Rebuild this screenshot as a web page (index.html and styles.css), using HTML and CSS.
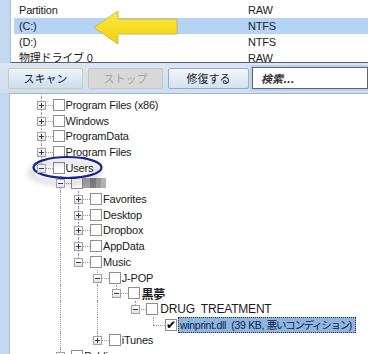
FILE: index.html
```html
<!DOCTYPE html>
<html lang="ja">
<head>
    <meta charset="UTF-8">
    <meta name="viewport" content="width=device-width, initial-scale=1.0">
    <title>ファイル修復</title>
    <link rel="stylesheet" href="styles.css">
</head>
<body>
    <div class="window">
        <div class="drives">
            <div class="drive"><span>Partition</span><span>RAW</span></div>
            <div class="drive selected"><span>(C:)</span><span>NTFS</span></div>
            <div class="drive"><span>(D:)</span><span>NTFS</span></div>
            <div class="drive"><span>物理ドライブ 0</span><span>RAW</span></div>
        </div>

        <div class="toolbar">
            <button class="btn hot">スキャン</button>
            <button class="btn" disabled>ストップ</button>
            <button class="btn">修復する</button>
            <div class="search">検索...</div>
        </div>

        <div class="tree">
            <div class="node stub"><span class="guide"></span><span class="guide line"></span></div>

            <div class="node"><span class="guide"></span><span class="twig more"><i class="exp plus"></i></span><span class="box"></span><span class="label">Program Files (x86)</span></div>
            <div class="node"><span class="guide"></span><span class="twig more"><i class="exp plus"></i></span><span class="box"></span><span class="label">Windows</span></div>
            <div class="node"><span class="guide"></span><span class="twig more"><i class="exp plus"></i></span><span class="box"></span><span class="label">ProgramData</span></div>
            <div class="node"><span class="guide"></span><span class="twig more"><i class="exp plus"></i></span><span class="box"></span><span class="label">Program Files</span></div>
            <div class="node"><span class="guide"></span><span class="twig"><i class="exp"></i></span><span class="box"></span><span class="label">Users</span></div>

            <div class="node"><span class="guide"></span><span class="guide"></span><span class="twig more"><i class="exp"></i></span><span class="box"></span><span class="blur"></span></div>

            <div class="node"><span class="guide"></span><span class="guide"></span><span class="guide line"></span><span class="twig more"><i class="exp plus"></i></span><span class="box"></span><span class="label">Favorites</span></div>
            <div class="node"><span class="guide"></span><span class="guide"></span><span class="guide line"></span><span class="twig more"><i class="exp plus"></i></span><span class="box"></span><span class="label">Desktop</span></div>
            <div class="node"><span class="guide"></span><span class="guide"></span><span class="guide line"></span><span class="twig more"><i class="exp plus"></i></span><span class="box"></span><span class="label">Dropbox</span></div>
            <div class="node"><span class="guide"></span><span class="guide"></span><span class="guide line"></span><span class="twig more"><i class="exp plus"></i></span><span class="box"></span><span class="label">AppData</span></div>
            <div class="node"><span class="guide"></span><span class="guide"></span><span class="guide line"></span><span class="twig"><i class="exp"></i></span><span class="box"></span><span class="label">Music</span></div>

            <div class="node"><span class="guide"></span><span class="guide"></span><span class="guide line"></span><span class="guide"></span><span class="twig more"><i class="exp"></i></span><span class="box"></span><span class="label">J-POP</span></div>
            <div class="node"><span class="guide"></span><span class="guide"></span><span class="guide line"></span><span class="guide"></span><span class="guide line"></span><span class="twig"><i class="exp"></i></span><span class="box"></span><span class="label jp">黒夢</span></div>
            <div class="node"><span class="guide"></span><span class="guide"></span><span class="guide line"></span><span class="guide"></span><span class="guide line"></span><span class="guide"></span><span class="twig"><i class="exp"></i></span><span class="box"></span><span class="label big">DRUG&nbsp; TREATMENT</span></div>
            <div class="node"><span class="guide"></span><span class="guide"></span><span class="guide line"></span><span class="guide"></span><span class="guide line"></span><span class="guide"></span><span class="guide"></span><span class="twig"></span><span class="box checked">✔</span><span class="label picked">winprint.dll&nbsp; (39 KB, <span class="cjk">悪いコンディション</span>)</span></div>
            <div class="node"><span class="guide"></span><span class="guide"></span><span class="guide line"></span><span class="guide"></span><span class="twig"><i class="exp plus"></i></span><span class="box"></span><span class="label">iTunes</span></div>

            <div class="node"><span class="guide"></span><span class="guide"></span><span class="twig"><i class="exp plus"></i></span><span class="box"></span><span class="label">Public</span></div>
        </div>

        <svg class="overlay" width="368" height="354" viewBox="0 0 368 354">
            <defs>
                <linearGradient id="gold" x1="0" y1="0" x2="0" y2="1">
                    <stop offset="0" stop-color="#fbe94c"/>
                    <stop offset="1" stop-color="#f3d200"/>
                </linearGradient>
                <filter id="shade" x="-30%" y="-60%" width="160%" height="240%">
                    <feGaussianBlur in="SourceAlpha" stdDeviation="3"/>
                    <feOffset dx="-3" dy="5" result="b"/>
                    <feComponentTransfer><feFuncA type="linear" slope="0.35"/></feComponentTransfer>
                    <feMerge><feMergeNode/><feMergeNode in="SourceGraphic"/></feMerge>
                </filter>
            </defs>
            <path d="M94 27.5 L118 11 L118 19 L177 19 L177 34 L118 34 L118 44 Z" fill="url(#gold)" stroke="#c9b861" stroke-width="1"/>
            <ellipse cx="67.5" cy="167.5" rx="34" ry="10.5" fill="none" stroke="#18288c" stroke-width="2.2" filter="url(#shade)"/>
        </svg>
    </div>
</body>
</html>
```

FILE: styles.css
```css
html, body {
    margin: 0;
    padding: 0;
}
body {
    font-family: "Liberation Sans", "Noto Sans CJK JP", sans-serif;
    font-size: 11px;
    color: #1b1b1b;
    background: #c3d7f0;
}
.window {
    position: relative;
    width: 368px;
    height: 354px;
    overflow: hidden;
}

/* drive list */
.drives {
    height: 60px;
    margin-left: 10px;
    padding: 2px 0 0 3px;
    background: #fff;
    border-left: 1px solid #a9c0de;
    border-bottom: 1px solid #55606e;
    overflow: hidden;
}
.drive {
    display: grid;
    grid-template-columns: 229px 1fr;
    height: 16px;
    line-height: 16px;
    padding-left: 5px;
    letter-spacing: -0.2px;
}
.drive.selected {
    background: #b5d3f7;
}

/* toolbar */
.toolbar {
    display: flex;
    align-items: center;
    gap: 5px;
    height: 30px;
    padding-left: 8px;
    background: linear-gradient(#dae6f4, #cfdef0);
}
.btn {
    flex: none;
    width: 75px;
    height: 21px;
    padding: 0;
    font-family: "Noto Sans CJK JP", sans-serif;
    font-size: 11px;
    color: #1c1c1c;
    border: 1px solid #9aabbf;
    border-radius: 2px;
    background: linear-gradient(#f3f7fc, #d2e1f2);
}
.btn.hot {
    border-color: #dcc98f;
    background: linear-gradient(#eef5fc, #c9dcf1);
}
.btn[disabled] {
    color: #a5a5a5;
    border-color: #c6c6c6;
    background: #d8d8d8;
}
.btn:last-of-type {
    width: 81px;
}
.search {
    flex: 1;
    height: 20px;
    line-height: 20px;
    margin-left: -2px;
    padding-left: 8px;
    background: #fff;
    border: 1px solid #5d6670;
    box-shadow: 0 0 0 2px #bcd0ea;
    font-family: "Noto Sans CJK JP", sans-serif;
    font-style: italic;
    font-weight: bold;
    color: #333;
}

/* tree */
.tree {
    margin-left: 9px;
    height: 270px;
    padding-left: 3px;
    background: #fff;
    border-top: 1px solid #9fb4cf;
    border-left: 1px solid #a9c0de;
    overflow: hidden;
}
.node {
    display: flex;
    align-items: center;
    height: 15.7px;
}
.node.stub {
    height: 3.15px;
}
.guide, .twig {
    position: relative;
    flex: none;
    width: 18.75px;
    height: 100%;
}
.guide.line::before,
.twig::before {
    content: "";
    position: absolute;
    left: 9px;
    top: 0;
    height: 50%;
    border-left: 1px dotted #9a9a9a;
}
.guide.line::before,
.twig.more::before {
    height: 100%;
}
.twig::after {
    content: "";
    position: absolute;
    left: 9px;
    right: -2px;
    top: 50%;
    border-top: 1px dotted #9a9a9a;
}
.exp {
    position: absolute;
    z-index: 1;
    left: 5px;
    top: 50%;
    width: 9px;
    height: 9px;
    margin-top: -4px;
    box-sizing: border-box;
    border: 1px solid #a2a2a2;
    background: linear-gradient(#ffffff, #e4e4e4);
}
.exp::before {
    content: "";
    position: absolute;
    left: 1px;
    top: 3px;
    width: 5px;
    height: 1px;
    background: #2a3a6a;
}
.exp.plus::after {
    content: "";
    position: absolute;
    left: 3px;
    top: 1px;
    width: 1px;
    height: 5px;
    background: #2a3a6a;
}
.box {
    flex: none;
    width: 12px;
    height: 12px;
    margin-left: 2px;
    box-sizing: border-box;
    border: 1px solid #8e8f8f;
    background: #fff;
}
.box.checked {
    font-family: "DejaVu Sans", sans-serif;
    font-size: 12px;
    font-weight: bold;
    line-height: 10px;
    text-align: center;
    color: #000;
}
.label {
    margin-left: 1px;
    white-space: nowrap;
    letter-spacing: -0.2px;
}
.label.jp {
    font-family: "Noto Sans CJK JP", sans-serif;
    font-size: 12px;
    font-weight: bold;
    margin-left: 2px;
}
.label.big {
    font-size: 12px;
    margin-left: 2px;
}
.label.picked {
    width: 175px;
    height: 14px;
    line-height: 14px;
    padding-left: 1px;
    overflow: hidden;
    font-size: 10.5px;
    letter-spacing: -0.3px;
    color: #0f2248;
    background: #8fb5e3;
    border: 1px dotted #2d3440;
}
.cjk {
    font-family: "Noto Sans CJK JP", sans-serif;
    font-size: 10.5px;
    letter-spacing: -1.3px;
}
.blur {
    width: 23px;
    height: 10px;
    background: linear-gradient(90deg, #a5a5a5 0 30%, #7d7d7d 30% 55%, #999 55% 80%, #b3b3b3 80%);
}

.overlay {
    position: absolute;
    left: 0;
    top: 0;
    pointer-events: none;
}
```
